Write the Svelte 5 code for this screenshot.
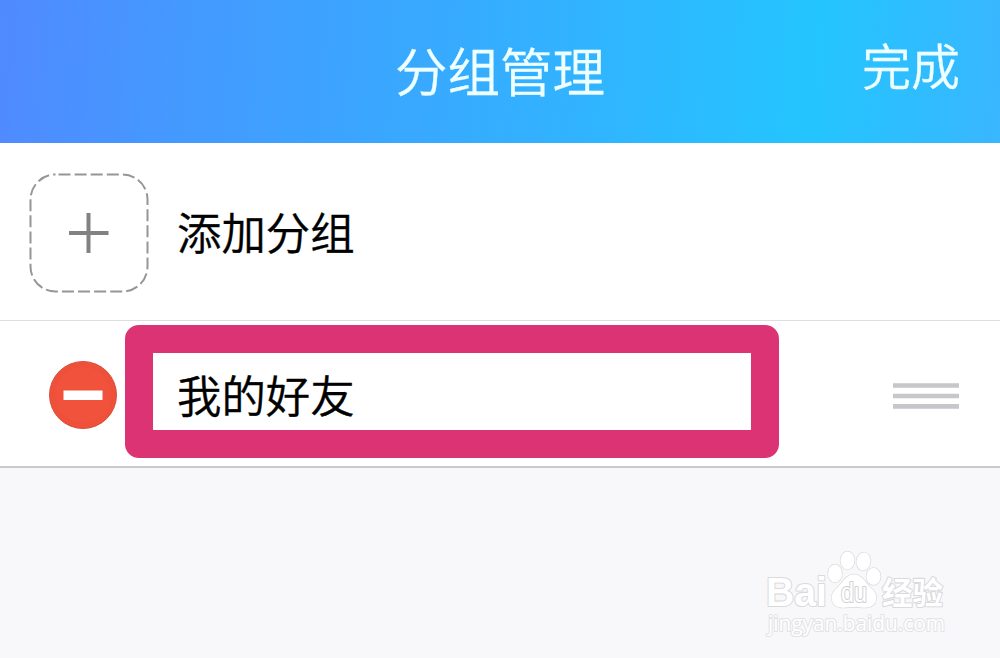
<script>
  const addLabel = '添加分组';
  const groups = ['我的好友'];
</script>

<div class="screen">
  <header>
    <span></span>
    <h1>分组管理</h1>
    <button class="done">完成</button>
  </header>

  <div class="row add">
    <svg class="plus" width="120" height="120" viewBox="0 0 120 120" aria-hidden="true">
      <rect x="1.5" y="1.5" width="117" height="117" rx="25" fill="none" stroke="#969696" stroke-width="2" stroke-dasharray="12 4.1" stroke-dashoffset="-3" />
      <path d="M40 60H79.500M59.500 40V80" fill="none" stroke="#828282" stroke-width="4" />
    </svg>
    <span class="label">{addLabel}</span>
  </div>

  {#each groups as group}
    <div class="row group">
      <svg class="remove" width="70" height="70" viewBox="0 0 70 70" aria-hidden="true">
        <circle cx="35" cy="35" r="33.500" fill="#ee5039" stroke="#d9513d" stroke-width="1" />
        <circle cx="35" cy="35" r="28" fill="#f0523b" />
        <rect x="15.500" y="30.500" width="39" height="9.500" fill="#fff" />
      </svg>
      <div class="frame"><span class="label">{group}</span></div>
      <svg class="handle" width="66" height="26" viewBox="0 0 66 26" aria-hidden="true">
        <path d="M0 2.500H66M0 13H66M0 23.400H66" stroke="#c6c6cb" stroke-width="4.600" />
      </svg>
    </div>
  {/each}

  <footer>
    <svg width="200" height="108" viewBox="755 540 200 108">
      <g class="mark">
        <text class="bai" x="766" y="606" textLength="61" lengthAdjust="spacingAndGlyphs">Bai</text>
        <ellipse cx="835" cy="573.500" rx="7" ry="9" />
        <ellipse cx="847.500" cy="560.500" rx="7" ry="9" />
        <ellipse cx="863.500" cy="561.500" rx="7" ry="9" transform="rotate(8 863.500 561.500)" />
        <ellipse cx="873.500" cy="576.500" rx="7" ry="8.500" />
        <path d="M854 574.500C846 574.500 843 582 838 587C832 592 830 597 833 603C837 610 846 607 854 607C862 607 870 610 875 603C878 597 876 592 870 587C865 582 862 574.500 854 574.500Z" />
        <text class="du" x="841" y="602" textLength="26" lengthAdjust="spacingAndGlyphs">du</text>
        <text class="cn" x="882" y="604" textLength="61" lengthAdjust="spacingAndGlyphs">经验</text>
        <text class="url" x="768" y="631" textLength="177" lengthAdjust="spacingAndGlyphs">jingyan.baidu.com</text>
      </g>
    </svg>
  </footer>
</div>

<style>
  :global(body) { margin: 0; }
  .screen {
    box-sizing: border-box;
    width: 1000px;
    height: 658px;
    display: flex;
    flex-direction: column;
    overflow: hidden;
    background: #f8f8fb;
    color: #000;
    font-family: "Noto Sans CJK SC", sans-serif;
    font-weight: 350;
  }
  header {
    box-sizing: border-box;
    height: 143px;
    flex: none;
    display: grid;
    grid-template-columns: 1fr auto 1fr;
    align-items: start;
    padding: 23px 40px 0;
    color: #edffff;
    background: linear-gradient(94deg, #508aff 0%, #4499ff 18%, #3ba5ff 36%, #31b3ff 58%, #24c5ff 81%, #39b6ff 100%);
  }
  h1 { margin: 8px 0 0; font-size: 52.5px; line-height: 76px; font-weight: 350; -webkit-text-stroke: 0.3px; }
  .done {
    justify-self: end;
    margin: 5px 0 0;
    padding: 0;
    border: 0;
    background: none;
    color: inherit;
    font: 350 49px/72px "Noto Sans CJK SC", sans-serif;
    -webkit-text-stroke: 0.3px;
  }
  .row {
    box-sizing: border-box;
    display: flex;
    align-items: center;
    flex: none;
    background: #fff;
  }
  .add { height: 178px; padding-left: 29px; border-bottom: 1px solid #dedee0; }
  .plus { margin-top: 2px; }
  .label { font-size: 44.4px; line-height: 64px; white-space: nowrap; -webkit-text-stroke: 0.4px; }
  .add .label { margin: 0 0 2px 28px; }
  .group { height: 147px; padding: 0 41px 0 48px; border-bottom: 2px solid #cacace; }
  .remove { margin-top: 3px; }
  .frame {
    box-sizing: border-box;
    width: 654px;
    height: 133px;
    margin: 0 0 5px 7px;
    padding-left: 24px;
    border: 28px solid #dc3375;
    border-radius: 14px;
    display: flex;
    align-items: center;
  }
  .frame .label { margin-top: 5px; }
  .handle { margin: 5px 0 0 auto; }
  footer { flex: 1; display: flex; justify-content: flex-end; align-items: flex-end; padding: 0 45px 10px 0; }
  .mark { fill: #fff; stroke: #dadadc; stroke-width: 1.4; paint-order: stroke; stroke-linejoin: round; }
  .mark text { stroke-width: 2.2; }
  .bai { font: 700 41px "Liberation Sans", sans-serif; }
  .mark .du { font: 400 27px "Liberation Sans", sans-serif; stroke: #d0d0d3; }
  .cn { font: 700 31px "Noto Sans CJK SC", sans-serif; }
  .mark .url { font: 400 22px "Open Sans", sans-serif; stroke: #e2e2e5; }
</style>
